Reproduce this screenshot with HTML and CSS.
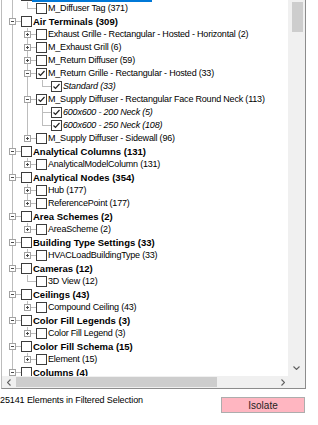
FILE: index.html
```html
<!DOCTYPE html>
<html>
<head>
    <title>Filtered Selection</title>
    <link rel="stylesheet" href="styles.css">
</head>
<body>
    <div class="panel">
        <div class="tree-box">
            <div class="viewport">
                <ul class="tree">
                    <li>
                        <div class="row root selected"><span class="toggle minus"></span><span class="cb"></span><span class="label"></span></div>
                        <ul>
                            <li><div class="row"><span class="toggle"></span><span class="cb"></span><span class="label">M_Diffuser Tag (371)</span></div></li>
                        </ul>
                    </li>
                    <li>
                        <div class="row root"><span class="toggle minus"></span><span class="cb"></span><span class="label">Air Terminals (309)</span></div>
                        <ul>
                            <li><div class="row"><span class="toggle plus"></span><span class="cb"></span><span class="label">Exhaust Grille - Rectangular - Hosted - Horizontal (2)</span></div></li>
                            <li><div class="row"><span class="toggle plus"></span><span class="cb"></span><span class="label">M_Exhaust Grill (6)</span></div></li>
                            <li><div class="row"><span class="toggle plus"></span><span class="cb"></span><span class="label">M_Return Diffuser (59)</span></div></li>
                            <li>
                                <div class="row"><span class="toggle minus"></span><span class="cb on"><svg viewBox="0 0 9 9"><path d="M1.5 4.5 L3.5 6.5 L7.5 2"/></svg></span><span class="label">M_Return Grille - Rectangular - Hosted (33)</span></div>
                                <ul>
                                    <li><div class="row type"><span class="toggle"></span><span class="cb on"><svg viewBox="0 0 9 9"><path d="M1.5 4.5 L3.5 6.5 L7.5 2"/></svg></span><span class="label">Standard (33)</span></div></li>
                                </ul>
                            </li>
                            <li>
                                <div class="row"><span class="toggle minus"></span><span class="cb on"><svg viewBox="0 0 9 9"><path d="M1.5 4.5 L3.5 6.5 L7.5 2"/></svg></span><span class="label">M_Supply Diffuser - Rectangular Face Round Neck (113)</span></div>
                                <ul>
                                    <li><div class="row type"><span class="toggle"></span><span class="cb on"><svg viewBox="0 0 9 9"><path d="M1.5 4.5 L3.5 6.5 L7.5 2"/></svg></span><span class="label">600x600 - 200 Neck (5)</span></div></li>
                                    <li><div class="row type"><span class="toggle"></span><span class="cb on"><svg viewBox="0 0 9 9"><path d="M1.5 4.5 L3.5 6.5 L7.5 2"/></svg></span><span class="label">600x600 - 250 Neck (108)</span></div></li>
                                </ul>
                            </li>
                            <li><div class="row"><span class="toggle plus"></span><span class="cb"></span><span class="label">M_Supply Diffuser - Sidewall (96)</span></div></li>
                        </ul>
                    </li>
                    <li>
                        <div class="row root"><span class="toggle minus"></span><span class="cb"></span><span class="label">Analytical Columns (131)</span></div>
                        <ul>
                            <li><div class="row"><span class="toggle plus"></span><span class="cb"></span><span class="label">AnalyticalModelColumn (131)</span></div></li>
                        </ul>
                    </li>
                    <li>
                        <div class="row root"><span class="toggle minus"></span><span class="cb"></span><span class="label">Analytical Nodes (354)</span></div>
                        <ul>
                            <li><div class="row"><span class="toggle plus"></span><span class="cb"></span><span class="label">Hub (177)</span></div></li>
                            <li><div class="row"><span class="toggle plus"></span><span class="cb"></span><span class="label">ReferencePoint (177)</span></div></li>
                        </ul>
                    </li>
                    <li>
                        <div class="row root"><span class="toggle minus"></span><span class="cb"></span><span class="label">Area Schemes (2)</span></div>
                        <ul>
                            <li><div class="row"><span class="toggle plus"></span><span class="cb"></span><span class="label">AreaScheme (2)</span></div></li>
                        </ul>
                    </li>
                    <li>
                        <div class="row root"><span class="toggle minus"></span><span class="cb"></span><span class="label">Building Type Settings (33)</span></div>
                        <ul>
                            <li><div class="row"><span class="toggle plus"></span><span class="cb"></span><span class="label">HVACLoadBuildingType (33)</span></div></li>
                        </ul>
                    </li>
                    <li>
                        <div class="row root"><span class="toggle minus"></span><span class="cb"></span><span class="label">Cameras (12)</span></div>
                        <ul>
                            <li><div class="row"><span class="toggle"></span><span class="cb"></span><span class="label">3D View (12)</span></div></li>
                        </ul>
                    </li>
                    <li>
                        <div class="row root"><span class="toggle minus"></span><span class="cb"></span><span class="label">Ceilings (43)</span></div>
                        <ul>
                            <li><div class="row"><span class="toggle plus"></span><span class="cb"></span><span class="label">Compound Ceiling (43)</span></div></li>
                        </ul>
                    </li>
                    <li>
                        <div class="row root"><span class="toggle minus"></span><span class="cb"></span><span class="label">Color Fill Legends (3)</span></div>
                        <ul>
                            <li><div class="row"><span class="toggle plus"></span><span class="cb"></span><span class="label">Color Fill Legend (3)</span></div></li>
                        </ul>
                    </li>
                    <li>
                        <div class="row root"><span class="toggle minus"></span><span class="cb"></span><span class="label">Color Fill Schema (15)</span></div>
                        <ul>
                            <li><div class="row"><span class="toggle plus"></span><span class="cb"></span><span class="label">Element (15)</span></div></li>
                        </ul>
                    </li>
                    <li class="more">
                        <div class="row root"><span class="toggle minus"></span><span class="cb"></span><span class="label">Columns (4)</span></div>
                    </li>
                </ul>
            </div>
            <div class="vscroll">
                <div class="thumb"></div>
                <div class="arrow"><svg width="7" height="4" viewBox="0 0 7 4"><path d="M0.5 0.5 L3.5 3.5 L6.5 0.5"/></svg></div>
            </div>
            <div class="hscroll">
                <div class="arrow left"><svg width="4" height="7" viewBox="0 0 4 7"><path d="M3.5 0.5 L0.5 3.5 L3.5 6.5"/></svg></div>
                <div class="thumb"></div>
                <div class="arrow right"><svg width="4" height="7" viewBox="0 0 4 7"><path d="M0.5 0.5 L3.5 3.5 L0.5 6.5"/></svg></div>
            </div>
            <div class="corner"></div>
        </div>
        <div class="footer">
            <span class="status">25141 Elements in Filtered Selection</span>
            <button class="isolate">Isolate</button>
        </div>
    </div>
</body>
</html>
```

FILE: styles.css
```css
body {
    margin: 0;
    font-family: "Liberation Sans", Arial, sans-serif;
    color: #000;
    background-color: white;
    overflow: hidden;
}
.panel {
    width: 318px;
}
.tree-box {
    margin-left: 1px;
    width: 305px;
    box-sizing: border-box;
    border: 1px solid #8c8c8c;
    border-top: none;
    border-left-color: #bcbcbc;
    display: grid;
    grid-template-columns: 286px 17px;
    grid-template-rows: 376px 12px;
}
.viewport {
    overflow: hidden;
    background-color: white;
}
.tree {
    list-style: none;
    margin: -11px 0 0;
    padding: 0 0 0 3px;
}
.tree ul {
    list-style: none;
    margin: 0;
    padding-left: 15px;
}
.tree li {
    position: relative;
}
.tree li::before {
    content: "";
    position: absolute;
    left: 7px;
    top: 0;
    bottom: 0;
    width: 1px;
    background-color: #bdbdbd;
}
.tree li:last-child::before {
    bottom: auto;
    height: 7px;
}
.tree li.more::before {
    bottom: 0;
    height: auto;
}
.row {
    position: relative;
    display: flex;
    align-items: center;
    height: 13px;
    white-space: nowrap;
}
.row::before {
    content: "";
    position: absolute;
    left: 8px;
    top: 6px;
    width: 8px;
    height: 1px;
    background-color: #bdbdbd;
}
.toggle {
    position: relative;
    flex: none;
    width: 16px;
    height: 13px;
}
.toggle.minus::before, .toggle.plus::before {
    content: "";
    position: absolute;
    left: 4px;
    top: 3px;
    width: 7px;
    height: 7px;
    box-sizing: border-box;
    border: 1px solid #a2a2a2;
    background-color: white;
}
.toggle.minus::after {
    content: "";
    position: absolute;
    left: 6px;
    top: 6px;
    width: 3px;
    height: 1px;
    background-color: #4a4a4a;
}
.toggle.plus::after {
    content: "";
    position: absolute;
    left: 6px;
    top: 5px;
    width: 3px;
    height: 3px;
    background:
        linear-gradient(#4a4a4a, #4a4a4a) 0 1px / 3px 1px no-repeat,
        linear-gradient(#4a4a4a, #4a4a4a) 1px 0 / 1px 3px no-repeat;
}
.cb {
    flex: none;
    width: 11px;
    height: 11px;
    box-sizing: border-box;
    border: 1px solid #3c3c3c;
    background-color: white;
}
.cb svg {
    display: block;
    width: 9px;
    height: 9px;
}
.cb svg path {
    fill: none;
    stroke: #222;
    stroke-width: 1.2;
}
.label {
    padding: 0 1px;
    font-size: 9px;
    letter-spacing: -0.2px;
    line-height: 13px;
}
.root .label {
    font-size: 9.5px;
    font-weight: bold;
    letter-spacing: 0;
}
.type .label {
    font-style: italic;
}
.selected .label {
    width: 118px;
    height: 13px;
    background-color: #0078d7;
}
.vscroll {
    display: flex;
    flex-direction: column;
    justify-content: space-between;
    background-color: #f0f0f0;
}
.vscroll .thumb {
    margin: 2px 0 0 4px;
    width: 11px;
    height: 30px;
    background-color: #cdcdcd;
}
.vscroll .arrow {
    display: flex;
    justify-content: center;
    align-items: center;
    height: 17px;
}
.hscroll {
    display: flex;
    align-items: center;
    background-color: #f0f0f0;
}
.hscroll .thumb {
    width: 201px;
    height: 10px;
    background-color: #cdcdcd;
}
.hscroll .arrow {
    display: flex;
    justify-content: center;
    align-items: center;
    height: 12px;
}
.hscroll .arrow.left {
    width: 14px;
}
.hscroll .arrow.right {
    margin-left: auto;
    width: 10px;
}
.arrow svg path {
    fill: none;
    stroke: #606060;
    stroke-width: 1.1;
}
.corner {
    background-color: #f0f0f0;
}
.footer {
    display: flex;
    justify-content: space-between;
    align-items: flex-start;
    width: 305px;
    padding-top: 6px;
}
.status {
    font-size: 9px;
    letter-spacing: -0.1px;
    line-height: 10px;
}
.isolate {
    margin-top: 2px;
    width: 84px;
    height: 16px;
    padding: 0;
    font-family: "Liberation Sans", Arial, sans-serif;
    font-size: 10px;
    color: #1e1e1e;
    background-color: #ffb6c1;
    border: 1px solid #adadad;
}
```
